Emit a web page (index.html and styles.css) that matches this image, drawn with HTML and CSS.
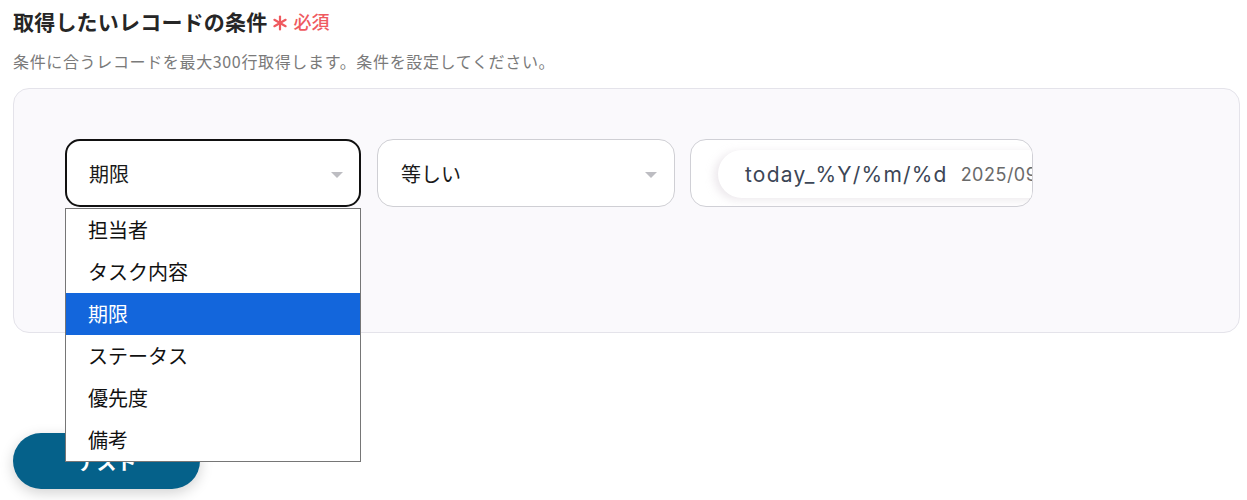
FILE: index.html
```html
<!DOCTYPE html>
<html lang="ja">
<head>
<meta charset="utf-8">
<link rel="stylesheet" href="styles.css">
</head>
<body>
<div class="page">
  <div class="title-row">
    <span class="title">取得したいレコードの条件</span>
    <span class="req"><svg class="ast" viewBox="0 0 16 16" width="16" height="16"><g stroke="#ef5a5f" stroke-width="2.2" stroke-linecap="round"><line x1="8" y1="1.5" x2="8" y2="14.5"/><line x1="2.4" y1="4.8" x2="13.6" y2="11.2"/><line x1="2.4" y1="11.2" x2="13.6" y2="4.8"/></g></svg>必須</span>
  </div>
  <p class="desc">条件に合うレコードを最大300行取得します。条件を設定してください。</p>
  <div class="panel">
    <div class="row">
      <div class="field sel sel-active">
        <span class="val">期限</span>
        <span class="arrow"></span>
        <ul class="menu">
          <li>担当者</li>
          <li>タスク内容</li>
          <li class="hl">期限</li>
          <li>ステータス</li>
          <li>優先度</li>
          <li>備考</li>
        </ul>
      </div>
      <div class="field sel sel-2">
        <span class="val">等しい</span>
        <span class="arrow"></span>
      </div>
      <div class="field inp">
        <div class="chip"><span class="chip-key">today_%Y/%m/%d</span><span class="chip-val">2025/09/18</span></div>
      </div>
    </div>
  </div>
  <button class="btn">テスト</button>
</div>
</body>
</html>
```

FILE: styles.css
```css
* { box-sizing: border-box; }
html, body { margin: 0; padding: 0; background: #fff; }
body { font-family: "Noto Sans CJK JP", "Noto Sans", sans-serif; color: #222; }
.page { padding: 8px 7px 0 13px; width: 1247px; height: 500px; overflow: hidden; }
.title-row { display: flex; align-items: center; height: 26px; }
.title { font-size: 21px; font-weight: 700; color: #262626; line-height: 26px; letter-spacing: 0.2px; }
.req { display: flex; align-items: center; color: #ef5a5f; font-size: 18px; font-weight: 500; margin-left: 5px; }
.ast { margin-right: 5px; margin-top: 4px; }
.desc { margin: 16px 0 0; font-size: 16px; line-height: 22px; color: #7a7a7a; letter-spacing: 0.65px; }
.panel { margin-top: 16px; height: 245px; border: 1px solid #e4e3ea; border-radius: 16px; background: #faf9fc; padding: 50px 0 0 51px; }
.row { display: flex; align-items: flex-start; }
.field { height: 68px; background: #fff; position: relative; }
.sel { display: flex; align-items: center; padding-left: 23px; }
.sel-active { width: 296px; border: 2px solid #111; border-radius: 15px; padding-left: 22px; }
.sel-2 { width: 298px; border: 1px solid #cfcfd4; border-radius: 16px; margin-left: 16px; }
.val { font-size: 20px; color: #1a1a1a; }
.arrow { position: absolute; right: 17px; top: 32px; width: 0; height: 0; border-left: 6px solid transparent; border-right: 6px solid transparent; border-top: 6px solid #bdbdc2; }
.sel-active .arrow { right: 16px; top: 31px; }
.inp { width: 343px; margin-left: 15px; border: 1px solid #d0d0d6; border-radius: 16px; overflow: hidden; padding: 10px 0 0 27px; }
.chip { display: flex; align-items: center; height: 48px; width: 360px; background: #fff; border-radius: 24px; padding-left: 27px; box-shadow: -4px 2px 8px rgba(200, 190, 200, 0.35); white-space: nowrap; }
.chip-key { font-family: Inter, "Noto Sans", sans-serif; font-size: 21px; color: #3c4656; letter-spacing: 1.2px; }
.chip-val { font-family: Inter, "Noto Sans", sans-serif; font-size: 18px; color: #6a6a6a; margin-left: 13px; letter-spacing: 0.5px; }
.menu { position: absolute; left: -2px; top: 67px; width: 296px; margin: 0; padding: 0; list-style: none; background: #fff; border: 1px solid #767676; z-index: 5; }
.menu li { height: 42px; line-height: 42px; padding-left: 22px; font-size: 20px; color: #111; }
.menu li.hl { background: #1366dc; color: #fff; }
.btn { display: block; margin-top: 100px; width: 187px; height: 56px; border: none; border-radius: 28px; background: #05618a; color: #fff; font-family: "Noto Sans CJK JP", sans-serif; font-size: 20px; font-weight: 700; box-shadow: 0 4px 14px rgba(0, 0, 0, 0.18); }
```
